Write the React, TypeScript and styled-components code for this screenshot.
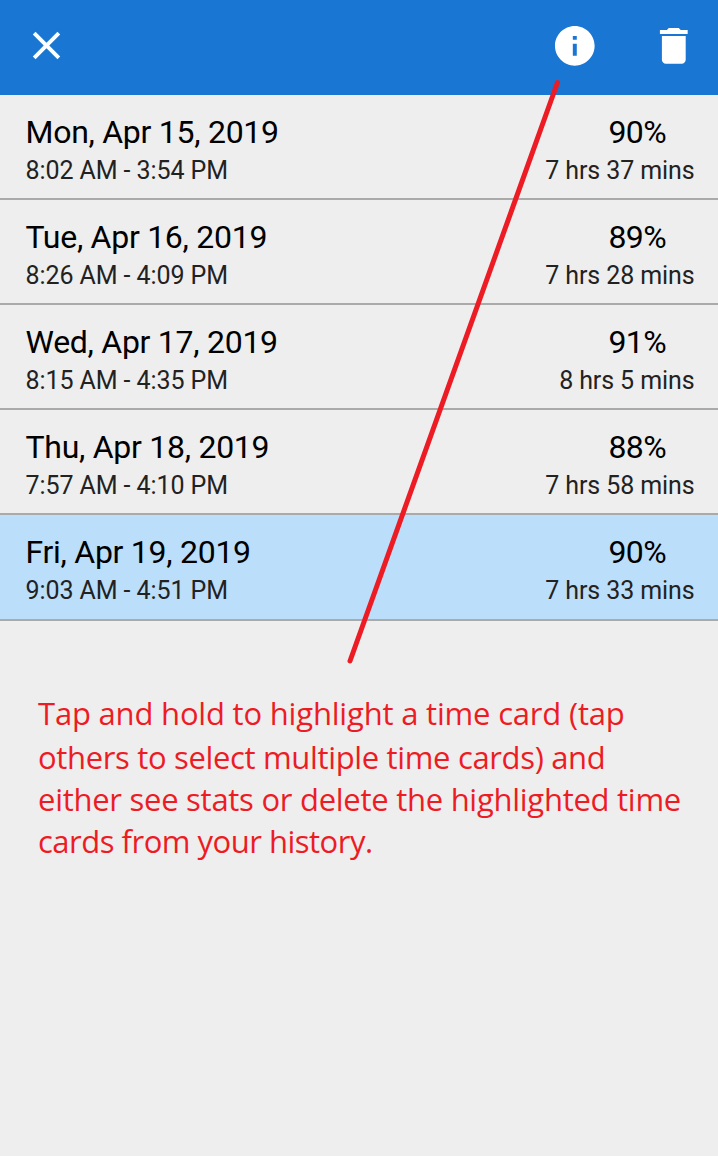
import React from "react";
import styled, { createGlobalStyle } from "styled-components";

const GlobalStyle = createGlobalStyle`
  * { box-sizing: border-box; }
  body { margin: 0; background: #eeeeee; font-family: Roboto, sans-serif; }
`;

const Screen = styled.main`
  position: relative;
  width: 718px;
  height: 1156px;
  background: #eeeeee;
  overflow: hidden;
`;

const Toolbar = styled.header`
  display: flex;
  align-items: center;
  height: 95px;
  padding: 0 20px 3.5px 22px;
  background: #1976d2;
`;

const IconButton = styled.button<{ $push?: boolean; $gap?: number }>`
  display: flex;
  align-items: center;
  justify-content: center;
  width: 48px;
  height: 48px;
  padding: 0;
  border: 0;
  background: none;
  color: #fff;
  margin-left: ${(p) => (p.$push ? "auto" : `${p.$gap ?? 0}px`)};
`;

const Row = styled.li<{ $selected: boolean }>`
  display: flex;
  justify-content: space-between;
  height: 105px;
  padding: 17px 23.5px 0 25.5px;
  border-bottom: 2px solid #aaaaaa;
  background: ${(p) => (p.$selected ? "#bbdefb" : "#eeeeee")};

  &:last-child {
    height: 106px;
  }
`;

const List = styled.ul`
  list-style: none;
  margin: 0;
  padding: 0;
`;

const Column = styled.div<{ $end?: boolean }>`
  display: flex;
  flex-direction: column;
  align-items: ${(p) => (p.$end ? "flex-end" : "flex-start")};
  white-space: nowrap;
`;

const Title = styled.span<{ $end?: boolean }>`
  font-size: 32px;
  line-height: 40px;
  letter-spacing: ${(p) => (p.$end ? "-0.6px" : "-0.27px")};
  color: #000;
  margin-right: ${(p) => (p.$end ? "28.5px" : "0")};
`;

const Detail = styled.span<{ $end?: boolean }>`
  font-size: 25px;
  line-height: 38px;
  letter-spacing: ${(p) => (p.$end ? "-0.1px" : "-0.08px")};
  color: #222;
`;

const Note = styled.p`
  margin: 71px 0 0 38px;
  font-family: "Open Sans", "Noto Sans", sans-serif;
  font-size: 31px;
  line-height: 42px;
  color: #ed1c24;
  white-space: nowrap;
`;

const NoteLine = styled.span<{ $spacing: number }>`
  display: block;
  letter-spacing: ${(p) => p.$spacing}px;

  &:first-child {
    margin-bottom: 2px;
  }
`;

const Pointer = styled.svg`
  position: absolute;
  inset: 0;
  pointer-events: none;
`;

const cards = [
  { date: "Mon, Apr 15, 2019", span: "8:02 AM - 3:54 PM", rate: "90%", total: "7 hrs 37 mins" },
  { date: "Tue, Apr 16, 2019", span: "8:26 AM - 4:09 PM", rate: "89%", total: "7 hrs 28 mins" },
  { date: "Wed, Apr 17, 2019", span: "8:15 AM - 4:35 PM", rate: "91%", total: "8 hrs 5 mins" },
  { date: "Thu, Apr 18, 2019", span: "7:57 AM - 4:10 PM", rate: "88%", total: "7 hrs 58 mins" },
  { date: "Fri, Apr 19, 2019", span: "9:03 AM - 4:51 PM", rate: "90%", total: "7 hrs 33 mins", selected: true },
];

const note = [
  { text: "Tap and hold to highlight a time card (tap", spacing: -0.19 },
  { text: "others to select multiple time cards) and", spacing: -0.34 },
  { text: "either see stats or delete the highlighted time", spacing: -0.27 },
  { text: "cards from your history.", spacing: -0.5 },
];

function Icon({ d, size = 47.6 }: { d: string; size?: number }) {
  return (
    <svg width={size} height={size} viewBox="0 0 24 24" fill="currentColor">
      <path d={d} />
    </svg>
  );
}

export default function App() {
  return (
    <Screen>
      <GlobalStyle />
      <Toolbar>
        <IconButton aria-label="Close">
          <Icon
            size={47}
            d="M19 6.41 17.59 5 12 10.59 6.41 5 5 6.41 10.59 12 5 17.59 6.41 19 12 13.41 17.59 19 19 17.59 13.41 12z"
          />
        </IconButton>
        <IconButton aria-label="Stats" $push>
          <Icon d="M12 2C6.48 2 2 6.48 2 12s4.48 10 10 10 10-4.48 10-10S17.52 2 12 2zm1 15h-2v-6h2v6zm0-8h-2V7h2v2z" />
        </IconButton>
        <IconButton aria-label="Delete" $gap={51}>
          <Icon d="M6 19c0 1.100.9 2 2 2h8c1.100 0 2-.9 2-2V7H6v12zM19 4h-3.500l-1-1h-5l-1 1H5v2h14V4z" />
        </IconButton>
      </Toolbar>
      <List>
        {cards.map((c) => (
          <Row key={c.date} $selected={!!c.selected}>
            <Column>
              <Title>{c.date}</Title>
              <Detail>{c.span}</Detail>
            </Column>
            <Column $end>
              <Title $end>{c.rate}</Title>
              <Detail $end>{c.total}</Detail>
            </Column>
          </Row>
        ))}
      </List>
      <Note>
        {note.map((l) => (
          <NoteLine key={l.text} $spacing={l.spacing}>{l.text}</NoteLine>
        ))}
      </Note>
      <Pointer width="718" height="1156" viewBox="0 0 718 1156">
        <path d="M557.500 82.500 350 661" stroke="#ed1c24" strokeWidth="5" strokeLinecap="round" />
      </Pointer>
    </Screen>
  );
}
